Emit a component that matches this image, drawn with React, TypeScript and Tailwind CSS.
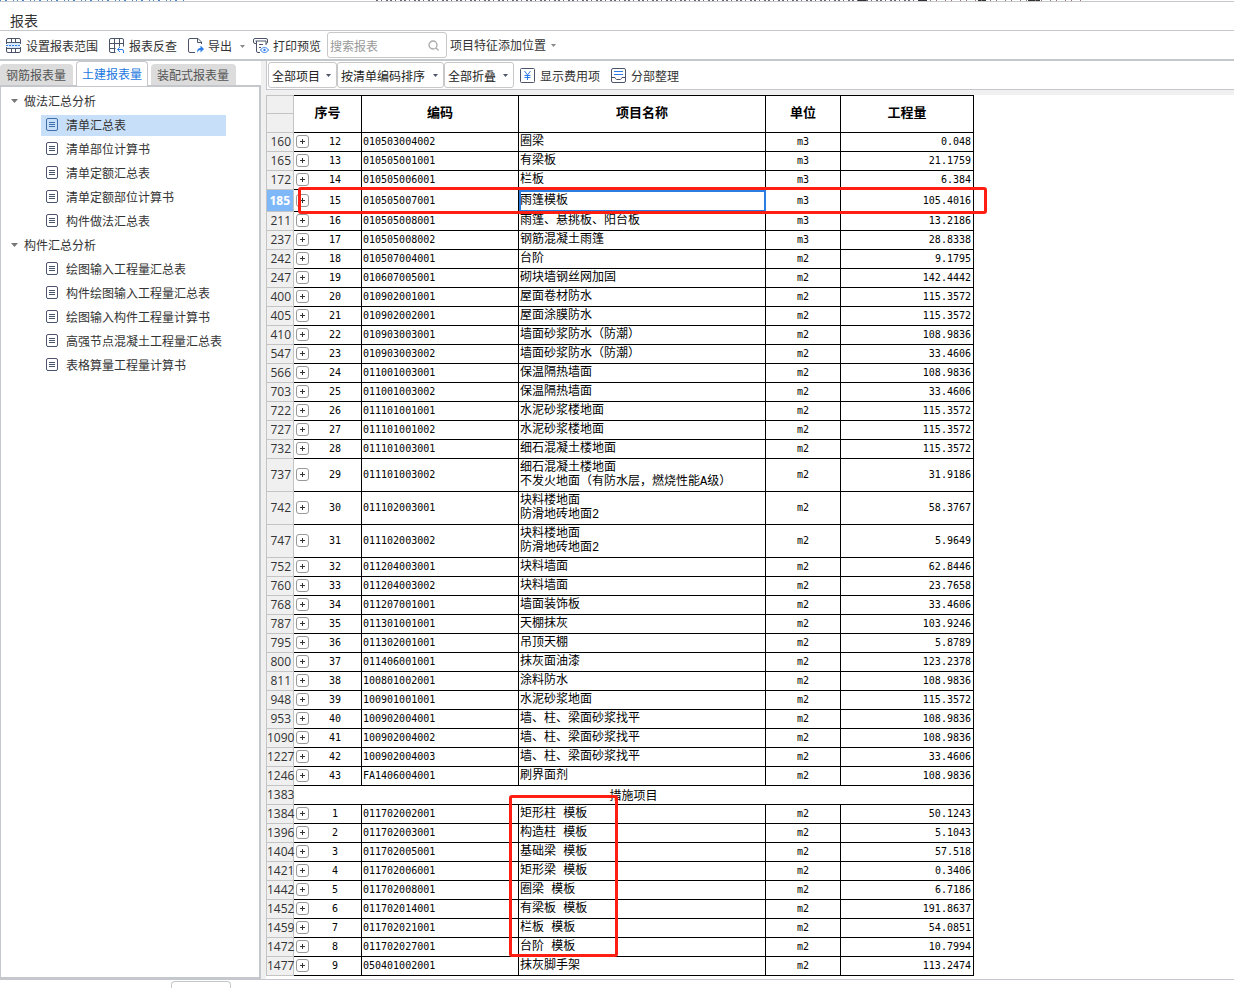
import { Fragment } from "react"

type Row = { n: number; no?: number; code?: string; name: string; unit?: string; qty?: string; active?: boolean }

const rows: Row[] = [
  { n: 160, no: 12, code: "010503004002", name: "圈梁", unit: "m3", qty: "0.048" },
  { n: 165, no: 13, code: "010505001001", name: "有梁板", unit: "m3", qty: "21.1759" },
  { n: 172, no: 14, code: "010505006001", name: "栏板", unit: "m3", qty: "6.384" },
  { n: 185, no: 15, code: "010505007001", name: "雨篷模板", unit: "m3", qty: "105.4016", active: true },
  { n: 211, no: 16, code: "010505008001", name: "雨篷、悬挑板、阳台板", unit: "m3", qty: "13.2186" },
  { n: 237, no: 17, code: "010505008002", name: "钢筋混凝土雨篷", unit: "m3", qty: "28.8338" },
  { n: 242, no: 18, code: "010507004001", name: "台阶", unit: "m2", qty: "9.1795" },
  { n: 247, no: 19, code: "010607005001", name: "砌块墙钢丝网加固", unit: "m2", qty: "142.4442" },
  { n: 400, no: 20, code: "010902001001", name: "屋面卷材防水", unit: "m2", qty: "115.3572" },
  { n: 405, no: 21, code: "010902002001", name: "屋面涂膜防水", unit: "m2", qty: "115.3572" },
  { n: 410, no: 22, code: "010903003001", name: "墙面砂浆防水（防潮）", unit: "m2", qty: "108.9836" },
  { n: 547, no: 23, code: "010903003002", name: "墙面砂浆防水（防潮）", unit: "m2", qty: "33.4606" },
  { n: 566, no: 24, code: "011001003001", name: "保温隔热墙面", unit: "m2", qty: "108.9836" },
  { n: 703, no: 25, code: "011001003002", name: "保温隔热墙面", unit: "m2", qty: "33.4606" },
  { n: 722, no: 26, code: "011101001001", name: "水泥砂浆楼地面", unit: "m2", qty: "115.3572" },
  { n: 727, no: 27, code: "011101001002", name: "水泥砂浆楼地面", unit: "m2", qty: "115.3572" },
  { n: 732, no: 28, code: "011101003001", name: "细石混凝土楼地面", unit: "m2", qty: "115.3572" },
  { n: 737, no: 29, code: "011101003002", name: "细石混凝土楼地面\n不发火地面（有防水层，燃烧性能A级）", unit: "m2", qty: "31.9186" },
  { n: 742, no: 30, code: "011102003001", name: "块料楼地面\n防滑地砖地面2", unit: "m2", qty: "58.3767" },
  { n: 747, no: 31, code: "011102003002", name: "块料楼地面\n防滑地砖地面2", unit: "m2", qty: "5.9649" },
  { n: 752, no: 32, code: "011204003001", name: "块料墙面", unit: "m2", qty: "62.8446" },
  { n: 760, no: 33, code: "011204003002", name: "块料墙面", unit: "m2", qty: "23.7658" },
  { n: 768, no: 34, code: "011207001001", name: "墙面装饰板", unit: "m2", qty: "33.4606" },
  { n: 787, no: 35, code: "011301001001", name: "天棚抹灰", unit: "m2", qty: "103.9246" },
  { n: 795, no: 36, code: "011302001001", name: "吊顶天棚", unit: "m2", qty: "5.8789" },
  { n: 800, no: 37, code: "011406001001", name: "抹灰面油漆", unit: "m2", qty: "123.2378" },
  { n: 811, no: 38, code: "100801002001", name: "涂料防水", unit: "m2", qty: "108.9836" },
  { n: 948, no: 39, code: "100901001001", name: "水泥砂浆地面", unit: "m2", qty: "115.3572" },
  { n: 953, no: 40, code: "100902004001", name: "墙、柱、梁面砂浆找平", unit: "m2", qty: "108.9836" },
  { n: 1090, no: 41, code: "100902004002", name: "墙、柱、梁面砂浆找平", unit: "m2", qty: "108.9836" },
  { n: 1227, no: 42, code: "100902004003", name: "墙、柱、梁面砂浆找平", unit: "m2", qty: "33.4606" },
  { n: 1246, no: 43, code: "FA1406004001", name: "刷界面剂", unit: "m2", qty: "108.9836" },
  { n: 1383, name: "措施项目" },
  { n: 1384, no: 1, code: "011702002001", name: "矩形柱 模板", unit: "m2", qty: "50.1243" },
  { n: 1396, no: 2, code: "011702003001", name: "构造柱 模板", unit: "m2", qty: "5.1043" },
  { n: 1404, no: 3, code: "011702005001", name: "基础梁 模板", unit: "m2", qty: "57.518" },
  { n: 1421, no: 4, code: "011702006001", name: "矩形梁 模板", unit: "m2", qty: "0.3406" },
  { n: 1442, no: 5, code: "011702008001", name: "圈梁 模板", unit: "m2", qty: "6.7186" },
  { n: 1452, no: 6, code: "011702014001", name: "有梁板 模板", unit: "m2", qty: "191.8637" },
  { n: 1459, no: 7, code: "011702021001", name: "栏板 模板", unit: "m2", qty: "54.0851" },
  { n: 1472, no: 8, code: "011702027001", name: "台阶 模板", unit: "m2", qty: "10.7994" },
  { n: 1477, no: 9, code: "050401002001", name: "抹灰脚手架", unit: "m2", qty: "113.2474" },
]

const tree = [
  { title: "做法汇总分析", items: ["清单汇总表", "清单部位计算书", "清单定额汇总表", "清单定额部位计算书", "构件做法汇总表"] },
  {
    title: "构件汇总分析",
    items: ["绘图输入工程量汇总表", "构件绘图输入工程量汇总表", "绘图输入构件工程量计算书", "高强节点混凝土工程量汇总表", "表格算量工程量计算书"],
  },
]

const tabs = ["钢筋报表量", "土建报表量", "装配式报表量"]

function Caret({ className = "" }: { className?: string }) {
  return (
    <svg className={className} width="5" height="3" viewBox="0 0 5 3" fill="currentColor" aria-hidden="true">
      <path d="M0 0h5L2.500 3z" />
    </svg>
  )
}

function RangeIcon() {
  return (
    <svg width="16" height="16" viewBox="0 0 16 16" fill="none" stroke="#4b5468" aria-hidden="true">
      <path d="M.5 6V2A1.500 1.500 0 0 1 2 .5h11A1.500 1.500 0 0 1 14.500 2v4M.5 9v4A1.500 1.500 0 0 0 2 14.500h11a1.500 1.500 0 0 0 1.500-1.500V9M5.500.5V5M9.500.5V5M5.500 10v4.500M9.500 10v4.500M1 4.500h13M1 10.500h13" />
      <path d="M1 5h13v5H1z" fill="#dcebfc" stroke="none" />
      <path d="M0 7.500h15" stroke="#2b7de9" strokeDasharray="2 1" />
    </svg>
  )
}

function TraceIcon() {
  return (
    <svg width="16" height="16" viewBox="0 0 16 16" fill="none" stroke="#4b5468" aria-hidden="true">
      <path d="M14.500 8.500V2A1.500 1.500 0 0 0 13 .5H2A1.500 1.500 0 0 0 .5 2v11A1.500 1.500 0 0 0 2 14.500h4.500M.5 5.500h14M.5 10.500h6M5.500.5v14M10.500.5v8" />
      <path d="M8.500 11.500H13a1.500 1.500 0 0 1 1.500 1.500v2M11 9l-2.500 2.500L11 14" stroke="#2b7de9" />
    </svg>
  )
}

function ExportIcon() {
  return (
    <svg width="16" height="16" viewBox="0 0 16 16" fill="none" stroke="#4b5468" aria-hidden="true">
      <path d="M7 14.500H2a1.500 1.500 0 0 1-1.500-1.500V2A1.500 1.500 0 0 1 2 .5h8l3.500 3.500V6M9.500.5v4h4" />
      <path d="M9 15c0-3.500 1-5 3.500-5V7.500L16 11l-3.500 3.500V12c-1.600 0-2.500.8-3.500 3z" fill="#2b7de9" stroke="none" />
    </svg>
  )
}

function PrintIcon() {
  return (
    <svg width="16" height="16" viewBox="0 0 16 16" fill="none" stroke="#4b5468" aria-hidden="true">
      <path d="M3 5.500H2A1.500 1.500 0 0 1 .5 4V2A1.500 1.500 0 0 1 2 .5h11A1.500 1.500 0 0 1 14.500 2v2a1.500 1.500 0 0 1-1.500 1.500M3.500 3v10A1.500 1.500 0 0 0 5 14.500h2M2.500 3h10.500v4M6 6.500h4M6 9.500h2" />
      <path d="M7.500 12c2-3.300 6-3.300 8 0-2 3.300-6 3.300-8 0z" stroke="#2b7de9" />
      <circle cx="11.500" cy="12" r="1.200" fill="#2b7de9" stroke="none" />
    </svg>
  )
}

function YuanIcon() {
  return (
    <svg width="16" height="16" viewBox="0 0 16 16" fill="none" stroke="#4b5468" aria-hidden="true">
      <rect x=".5" y=".5" width="14" height="14" rx="1" />
      <path d="M4.500 3l3 4 3-4M7.500 7v5M4.500 7.500h6M4.500 9.500h6" stroke="#2b7de9" />
    </svg>
  )
}

function SectionIcon() {
  return (
    <svg width="16" height="16" viewBox="0 0 16 16" fill="none" stroke="#4b5468" aria-hidden="true">
      <rect x=".5" y=".5" width="14" height="14" rx="1.500" />
      <path d="M.5 9.500H4c.5 1.300 1.200 2 2 2h3c.8 0 1.500-.7 2-2h3.500" />
      <path d="M3 3.500h9M3 6.500h9" stroke="#2b7de9" />
    </svg>
  )
}

function SheetIcon({ active }: { active: boolean }) {
  return (
    <svg width="12" height="14" viewBox="0 0 12 14" fill="none" stroke={active ? "#3f6ea8" : "#4b5468"} aria-hidden="true">
      <rect x=".5" y=".5" width="11" height="12" rx="1.500" />
      <path d="M3 4.500h6M3 6.500h6M3 8.500h6" />
    </svg>
  )
}

function ToolButton({ icon, children }: any) {
  return (
    <button className="flex items-center gap-1 whitespace-nowrap">
      {icon}
      <span>{children}</span>
    </button>
  )
}

function Select({ label, value, width }: { label: string; value: string; width: string }) {
  return (
    <div className={`relative h-[26px] ${width}`}>
      <select aria-label={label} className="h-full w-full appearance-none rounded-[3px] border border-[#c8c8c8] bg-white pl-[3px] pt-px text-xs text-[#222]">
        <option>{value}</option>
      </select>
      <Caret className="pointer-events-none absolute right-[6px] top-3 text-[#4b5468]" />
    </div>
  )
}

function Sidebar() {
  return (
    <aside className="flex w-[261px] shrink-0 flex-col">
      <div role="tablist" className="flex h-6 items-end gap-[3px]">
        {tabs.map((t, i) =>
          i === 1 ? (
            <button key={t} role="tab" aria-selected="true" className="relative z-10 -mb-px h-[25px] rounded-t border border-b-0 border-[#c4c8cc] bg-white px-[5px] text-[#1a78e0]">
              {t}
            </button>
          ) : (
            <button key={t} role="tab" aria-selected="false" className="h-[21px] rounded-t bg-[#dcdcdc] pl-[6px] pr-[7px] text-[#555]">
              {t}
            </button>
          )
        )}
      </div>
      <div className="flex-1 border-2 border-l border-[#c4c8cc] bg-white pt-[2px]">
        {tree.map((g, gi) => (
          <Fragment key={g.title}>
            <button className="flex h-6 items-center pl-[10px]">
              <svg width="7" height="4" viewBox="0 0 7 4" fill="#777" aria-hidden="true">
                <path d="M0 0h7L3.500 4z" />
              </svg>
              <span className="pl-[6px]">{g.title}</span>
            </button>
            <ul>
              {g.items.map((item, i) => {
                const active = gi === 0 && i === 0
                return (
                  <li key={item} className="flex h-6 items-center pl-10">
                    <button className={`flex h-[21px] w-[185px] items-center gap-2 whitespace-nowrap pl-[5px] ${active ? "bg-[#c7dff8]" : ""}`}>
                      <SheetIcon active={active} />
                      <span>{item}</span>
                    </button>
                  </li>
                )
              })}
            </ul>
          </Fragment>
        ))}
      </div>
    </aside>
  )
}

function RowNumber({ row }: { row: Row }) {
  return (
    <th
      scope="row"
      className={`whitespace-nowrap border-b border-l border-r border-[#c4c4c4] p-0 text-right font-['Open_Sans','Noto_Sans',sans-serif] leading-4 ${
        row.active ? "bg-[#7fb8f8] pr-[3px] font-bold text-white" : `bg-[#f0f0f0] font-normal text-[#333] ${row.n < 1000 ? "pr-[2px]" : ""}`
      }`}
    >
      {row.n}
    </th>
  )
}

function DataTable() {
  const cell = "border-b border-r border-black p-0"
  const num = "font-['DejaVu_Sans_Mono',monospace] text-[10px] leading-[14px]"
  return (
    <table className="w-[708px] table-fixed border-separate border-spacing-0 text-xs text-black">
      <colgroup>
        <col className="w-[28px]" />
        <col className="w-[68px]" />
        <col className="w-[157px]" />
        <col className="w-[247px]" />
        <col className="w-[75px]" />
        <col className="w-[133px]" />
      </colgroup>
      <thead className="text-[13px]">
        <tr className="h-[19px]">
          <td className="border border-[#c4c4c4] bg-[#f0f0f0] p-0" />
          {["序号", "编码", "项目名称", "单位", "工程量"].map((h) => (
            <th key={h} rowSpan={2} className="border-b border-r border-t border-black px-0 pb-1 pt-0 font-bold">
              {h}
            </th>
          ))}
        </tr>
        <tr className="h-[19px]">
          <td className="border border-t-0 border-[#c4c4c4] bg-[#f0f0f0] p-0" />
        </tr>
      </thead>
      <tbody>
        {rows.map((r) => (
          <tr key={r.n} className={r.active ? "h-[22px]" : r.name.includes("\n") ? "h-[33px]" : "h-[19px]"}>
            <RowNumber row={r} />
            {r.no ? (
              <>
                <td className={cell}>
                  <div className="flex items-start pl-[2px]">
                    <button aria-label="展开" className="flex size-[13px] items-center justify-center rounded-[3px] border border-[#999] bg-white">
                      <svg width="5" height="5" viewBox="0 0 5 5" stroke="#333" aria-hidden="true">
                        <path d="M0 2.500h5M2.500 0v5" />
                      </svg>
                    </button>
                    <span className={`flex-1 text-center ${num}`}>{r.no}</span>
                  </div>
                </td>
                <td className={`${cell} ${num} pl-px`}>{r.code}</td>
                <td
                  className={`${cell} whitespace-pre pl-px font-['Liberation_Mono','Noto_Sans_CJK_SC',monospace] leading-[14px] ${
                    r.active ? "outline-2 -outline-offset-2 outline-[#2a7de1]" : ""
                  }`}
                >
                  {r.name}
                </td>
                <td className={`${cell} ${num} text-center`}>{r.unit}</td>
                <td className={`${cell} ${num} pr-[2px] text-right`}>{r.qty}</td>
              </>
            ) : (
              <td colSpan={5} className={`${cell} text-center leading-[14px]`}>
                {r.name}
              </td>
            )}
          </tr>
        ))}
      </tbody>
    </table>
  )
}

export default function App() {
  return (
    <div className="flex min-h-screen flex-col bg-white font-['Noto_Sans_CJK_SC',sans-serif] text-xs text-[#333]">
      <svg className="h-px w-full" aria-hidden="true">
        <path d="M0 .5h186" stroke="#4a86c8" strokeDasharray="1 4 2 6 1 3" />
        <path d="M376 .5h550" stroke="#6b6470" strokeDasharray="2 3 1 4 2 2" />
        <path d="M858 .5h8M918 .5h9M978 .5h8M1028 .5h12" stroke="#333" />
        <path d="M930 .5h153" stroke="#9a7468" strokeDasharray="1 5 1 8" />
      </svg>
      <header>
        <h1 className="flex h-[30px] items-center border-y border-[#c4c8cc] pl-[10px] pt-2 text-sm">报表</h1>
        <div className="flex h-[30px] items-center border-b-2 border-[#c4c8cc] pl-[6px]">
          <div className="flex items-center gap-2 pt-[2px]">
            <div className="flex items-center gap-[11px]">
              <ToolButton icon={<RangeIcon />}>设置报表范围</ToolButton>
              <ToolButton icon={<TraceIcon />}>报表反查</ToolButton>
              <ToolButton icon={<ExportIcon />}>导出</ToolButton>
            </div>
            <Caret className="text-[#888]" />
            <ToolButton icon={<PrintIcon />}>打印预览</ToolButton>
          </div>
          <div className="relative ml-[6px] h-[26px] w-[120px]">
            <input aria-label="搜索报表" placeholder="搜索报表" className="h-full w-full rounded-[3px] border border-[#c8c8c8] pl-[2px] pr-5 text-xs placeholder:text-[#999]" />
            <svg className="absolute right-2 top-2" width="11" height="11" viewBox="0 0 11 11" fill="none" stroke="#aaa" strokeWidth="1.300" aria-hidden="true">
              <circle cx="5" cy="5" r="4" />
              <path d="M8 8l2.500 2.500" />
            </svg>
          </div>
          <button className="flex items-center gap-[5px] whitespace-nowrap pl-[3px]">
            项目特征添加位置
            <Caret className="text-[#888]" />
          </button>
        </div>
      </header>
      <div className="flex flex-1 border-b border-[#c4c8cc]">
        <Sidebar />
        <div className="w-[5px] shrink-0 bg-[#f0f0f0]" />
        <main className="min-w-0 flex-1">
          <div className="flex h-[29px] items-center border-b border-l border-[#c4c8cc] pl-px">
            <Select label="项目范围" value="全部项目" width="w-[69px]" />
            <Select label="排序方式" value="按清单编码排序" width="w-[107px]" />
            <Select label="折叠方式" value="全部折叠" width="w-[70px]" />
            <div className="flex gap-[11px] pl-[6px] pt-px">
              <ToolButton icon={<YuanIcon />}>显示费用项</ToolButton>
              <ToolButton icon={<SectionIcon />}>分部整理</ToolButton>
            </div>
          </div>
          <div className="h-[5px] bg-[#f0f0f0]" />
          <div className="relative pb-[3px]">
            <DataTable />
            <div className="pointer-events-none absolute left-8 top-[92px] h-[27px] w-[689px] rounded-[3px] border-3 border-[#ff1e12]" />
            <div className="pointer-events-none absolute left-[243px] top-[700px] h-[162px] w-[109px] rounded-[3px] border-3 border-[#ff1e12]" />
          </div>
        </main>
      </div>
      <footer className="flex h-2 items-end overflow-hidden pl-[171px]">
        <div className="h-[7px] w-[60px] rounded-t border border-b-0 border-[#c4c8cc]" />
      </footer>
    </div>
  )
}
